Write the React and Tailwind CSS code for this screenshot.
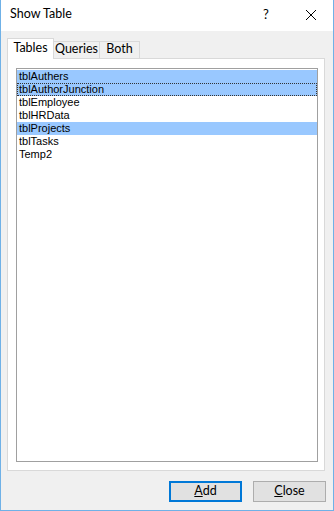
import React from 'react';

const tables = [
  { name: 'tblAuthers', selected: true },
  { name: 'tblAuthorJunction', selected: true, focused: true },
  { name: 'tblEmployee' },
  { name: 'tblHRData' },
  { name: 'tblProjects', selected: true },
  { name: 'tblTasks' },
  { name: 'Temp2' },
];

const uiFont = { fontFamily: 'Lato, "Noto Sans", sans-serif' };

const App = () => {
  return (
    <div
      className="w-[334px] h-[511px] flex flex-col border-l border-r border-b border-[#6fb1e7] bg-[#f0f0f0] text-black"
      style={uiFont}
    >
      {/* title bar */}
      <div className="h-[31px] bg-white flex items-center pl-[9px] text-[12.5px] leading-none">
        <span className="flex-1 pb-[2px]">Show Table</span>
        <span className="w-[12px] text-[13px] mr-[30px] pb-[2px]">?</span>
        <svg width="12" height="12" viewBox="0 0 12 12" className="mr-[16px] mb-[1px]">
          <path d="M1 1 L11 11 M11 1 L1 11" stroke="#000" strokeWidth="1" />
        </svg>
      </div>

      {/* body */}
      <div className="flex-1 flex flex-col pl-[6px] pr-[8px] pt-[7px]">
        {/* tabs */}
        <div className="flex items-end h-[20px] text-[12.5px] leading-none">
          <div className="relative z-10 w-[47px] h-[21px] -mb-px bg-white border border-b-0 border-[#d9d9d9] flex items-center justify-center pb-[2px]">
            Tables
          </div>
          <div className="w-[47px] h-[17px] -ml-px border border-b-0 border-[#d9d9d9] flex items-center justify-center pb-[1px]">
            Queries
          </div>
          <div className="w-[41px] h-[17px] -ml-px border border-b-0 border-[#d9d9d9] flex items-center justify-center pb-[1px]">
            Both
          </div>
        </div>

        {/* panel */}
        <div className="w-[318px] h-[413px] bg-white border border-[#d9d9d9]">
          <div
            className="ml-[8px] mt-[9px] w-[302px] h-[394px] border border-[#a0a0a0] pt-px text-[11px] leading-[13px]"
            style={{ fontFamily: '"Liberation Sans", Arial, sans-serif' }}
          >
            {tables.map((t) => (
              <div
                key={t.name}
                className={`h-[13px] pl-[2px] whitespace-nowrap ${
                  t.selected ? 'bg-[#99c8ff]' : ''
                } ${t.focused ? 'outline outline-1 outline-dotted outline-[#333] -outline-offset-1' : ''}`}
              >
                {t.name}
              </div>
            ))}
          </div>
        </div>

        {/* buttons */}
        <div className="flex justify-end gap-[11px] mt-[10px] text-[12.5px] leading-none">
          <button className="w-[73px] h-[21px] bg-[#e1e1e1] border-2 border-[#0078d7] flex items-center justify-center pb-[1px]">
            <span>
              <span className="underline">A</span>dd
            </span>
          </button>
          <button className="w-[73px] h-[21px] -mr-px bg-[#e1e1e1] border border-[#adadad] flex items-center justify-center pb-[1px]">
            <span>
              <span className="underline">C</span>lose
            </span>
          </button>
        </div>
      </div>
    </div>
  );
};

export default App;
